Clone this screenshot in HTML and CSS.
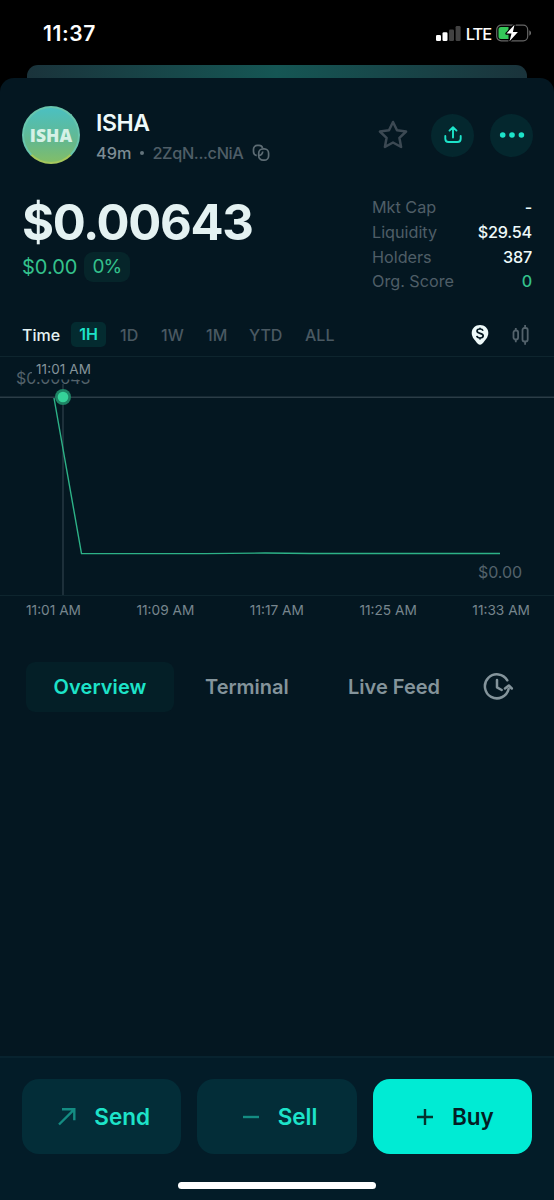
FILE: index.html
```html
<!DOCTYPE html>
<html lang="en">
<head>
<meta charset="utf-8">
<title>ISHA</title>
<link rel="stylesheet" href="styles.css">
</head>
<body>
<div class="phone">
  <header class="status">
    <span class="clock">11:37</span>
    <div class="status-right">
      <svg class="signal" width="25" height="16" viewBox="0 0 25 16">
        <rect x="0" y="9" width="5" height="6" rx="1.3" fill="#fff"/>
        <rect x="6.5" y="6.3" width="5" height="8.7" rx="1.3" fill="#fff"/>
        <rect x="13" y="3.4" width="5" height="11.6" rx="1.3" fill="#424242"/>
        <rect x="19.6" y="0" width="5" height="15" rx="1.3" fill="#424242"/>
      </svg>
      <span class="lte">LTE</span>
      <svg class="battery" width="36" height="18" viewBox="0 0 36 18">
        <rect x=".7" y="1.2" width="31" height="15.6" rx="4.5" fill="none" stroke="#666" stroke-width="1.2"/>
        <path d="M33.4 6.3q1.6 1 1.6 2.7t-1.6 2.7z" fill="#777"/>
        <path d="M5 3h7.5v12H5a2.500 2.500 0 0 1-2.500-2.500v-7A2.500 2.500 0 0 1 5 3z" fill="#35c759"/>
        <path d="M18.500.8L10.500 9.500h5l-2 7.700 8.400-9.200h-5z" fill="#fff" stroke="#000" stroke-width="2.400" paint-order="stroke" stroke-linejoin="round"/>
      </svg>
    </div>
  </header>
  <div class="back-card"></div>
  <main class="sheet">
    <section class="token">
      <div class="avatar">ISHA</div>
      <div class="identity">
        <h1 class="name">ISHA</h1>
        <div class="meta">
          <span class="age">49m</span><span class="dot"></span><span class="address">2ZqN...cNiA</span>
          <svg class="copy" width="18" height="18" viewBox="0 0 18 18" fill="none" stroke="#5d6c74" stroke-width="1.700">
            <path d="M4.700 11.600C2.700 11 1.500 9.400 1.500 7.400V5.200A3.800 3.800 0 0 1 5.300 1.400h1.800a3.800 3.800 0 0 1 3.500 2.600M6.700 11.400a3.900 3.900 0 0 0 4-3.900"/>
            <rect x="6.700" y="4.900" width="9.900" height="11.300" rx="4.300"/>
          </svg>
        </div>
      </div>
      <div class="actions">
        <svg class="star" width="30" height="30" viewBox="0 0 30 30" fill="none" stroke="#3c4953" stroke-width="2.500" stroke-linejoin="round"><path d="M15 2l4 8.300 9.100 1.200-6.700 6.300 1.700 9.200-8.100-4.500-8.100 4.500 1.700-9.200-6.700-6.300 9.100-1.200z"/></svg>
        <span class="round"><svg width="20" height="20" viewBox="0 0 20 20" fill="none" stroke="#1de3c9" stroke-width="1.900" stroke-linecap="round" stroke-linejoin="round"><path d="M10 12.500V2.500M6.500 5.600L10 2.200l3.500 3.400M2.300 11v2.700q0 3.300 3.300 3.300h8.800q3.300 0 3.300-3.300V11"/></svg></span>
        <span class="round"><svg width="26" height="8" viewBox="0 0 26 8" fill="#1de3c9"><circle cx="3.700" cy="4" r="2.800"/><circle cx="13" cy="4" r="2.800"/><circle cx="22.400" cy="4" r="2.800"/></svg></span>
      </div>
    </section>
    <section class="summary">
      <div>
        <div class="price">$0.00643</div>
        <div class="change"><span>$0.00</span><span class="percent">0%</span></div>
      </div>
      <dl class="stats">
        <dt>Mkt Cap</dt><dd>-</dd>
        <dt>Liquidity</dt><dd>$29.54</dd>
        <dt>Holders</dt><dd>387</dd>
        <dt>Org. Score</dt><dd class="score">0</dd>
      </dl>
    </section>
    <nav class="ranges">
      <span class="label">Time</span>
      <span class="active">1H</span>
      <span class="d1">1D</span><span class="w1">1W</span><span class="m1">1M</span><span class="ytd">YTD</span><span class="all">ALL</span>
      <svg class="pin" width="18" height="22" viewBox="0 0 18 22"><path d="M9 1c4.700 0 8.300 3.500 8.300 8 0 4-2.900 7.200-6.100 10.700Q9 22 6.800 19.700C3.600 16.200.7 13 .7 9 .7 4.500 4.300 1 9 1z" fill="#eefafa"/><path d="M12 6.800C11.600 5.500 10.400 5 9 5 7.300 5 6 5.800 6 7.100c0 1.600 1.300 1.900 3 2.300s3.200.8 3.200 2.400c0 1.400-1.400 2.200-3.200 2.200-1.600 0-2.900-.7-3.200-2.100M9 3.700V5m0 9v1.400" fill="none" stroke="#041721" stroke-width="1.700"/></svg>
      <svg class="candles" width="18" height="22" viewBox="0 0 18 22" fill="none" stroke="#53626b" stroke-width="1.800"><rect x="1.500" y="6.500" width="4.600" height="9" rx="2"/><rect x="10.500" y="4" width="5.200" height="13.500" rx="2"/><path d="M3.800 4V6.500m0 9v2.700M13.100 1v3m0 13.500v3.200"/></svg>
    </nav>
    <svg class="chart" width="554" height="238" viewBox="0 0 554 238">
      <text class="level" x="16" y="26.800">$0.00643</text>
      <rect x="32" y="2" width="62" height="20.500" fill="#041721"/>
      <path class="grid" d="M0 40.200H554"/>
      <path class="cursor" d="M63 27V238"/>
      <path class="series" d="M54 41L81.500 196.600H205L265 196 310 196.500H500"/>
      <circle cx="63" cy="40" r="8" fill="#1f8465"/>
      <circle cx="63" cy="40" r="5.300" fill="#35d399"/>
      <text class="tick" x="36" y="16.800" textLength="55">11:01 AM</text>
      <text class="level" x="478" y="221" textLength="44">$0.00</text>
    </svg>
    <div class="axis"><span>11:01 AM</span><span>11:09 AM</span><span>11:17 AM</span><span>11:25 AM</span><span>11:33 AM</span></div>
    <nav class="tabs">
      <span class="tab selected">Overview</span>
      <span class="tab terminal">Terminal</span>
      <span class="tab feed">Live Feed</span>
      <svg class="history" width="32" height="30" viewBox="0 0 32 30" fill="none" stroke="#84949b" stroke-width="2.500" stroke-linecap="round" stroke-linejoin="round"><path d="M25.300 8.300A12 12 0 1 0 26.600 17M15 8v7.300l4.700 2.700M23 16.500l3.800-3 3 3"/></svg>
    </nav>
  </main>
  <footer class="bar">
    <div class="buttons">
      <div class="button"><svg width="20" height="20" viewBox="0 0 20 20"><path d="M2 17.500L17 2.700M5 2.300h12.300v11"/></svg><span class="send">Send</span></div>
      <div class="button"><svg width="20" height="20" viewBox="0 0 20 20"><path d="M2 10h16"/></svg><span class="sell">Sell</span></div>
      <div class="button buy"><svg width="20" height="20" viewBox="0 0 20 20"><path d="M2 10h16M10 2v16"/></svg><span class="buy-text">Buy</span></div>
    </div>
    <div class="home"></div>
  </footer>
</div>
</body>
</html>
```

FILE: styles.css
```css
* { box-sizing: border-box; }
body { margin: 0; background: #000; font-family: Inter, "Liberation Sans", sans-serif; }
svg { display: block; flex: none; }
.phone { width: 554px; height: 1200px; display: flex; flex-direction: column; overflow: hidden; }
.status { height: 65px; flex: none; display: flex; justify-content: space-between; padding: 21px 22px 0 43px; color: #fff; }
.clock { font-size: 21px; line-height: 26px; font-weight: 600; letter-spacing: .6px; }
.status-right { display: flex; align-items: flex-start; }
.signal { margin-top: 5px; }
.lte { font-size: 16.500px; line-height: 26px; font-weight: 500; letter-spacing: -1.100px; margin-left: 5px; margin-right: 5px; }
.battery { margin-top: 3px; }
.back-card { height: 13px; flex: none; margin: 0 27px; border-radius: 11px 11px 0 0; background: linear-gradient(90deg, #1a333b, #155654 50%, #1a333b); }
.sheet { flex: 1; background: #041721; border-radius: 14px 14px 0 0; display: flex; flex-direction: column; }
.token { display: flex; height: 86px; padding: 28px 21px 0 22px; }
.avatar { width: 58px; height: 58px; border-radius: 50%; border: 2px solid #69c5ad; border-bottom-color: #a5c85d; background: linear-gradient(#4bc0c1, #66b88b 65%, #82be68); color: #d5f1e6; font: 800 17.500px/54px "Open Sans", sans-serif; text-align: center; }
.identity { margin-left: 16px; padding-top: 2px; }
.name { margin: 0; font-size: 23px; font-weight: 600; line-height: 30px; letter-spacing: -.4px; color: #eefafa; }
.meta { display: flex; align-items: center; height: 30px; font-size: 16.300px; font-weight: 500; color: #4f5e67; }
.age { color: #7c8c94; }
.address { letter-spacing: -.35px; }
.dot { width: 4px; height: 4px; border-radius: 50%; background: #63737b; margin: 0 8px 0 9px; }
.copy { margin-left: 8px; }
.actions { margin-left: auto; display: flex; align-items: center; height: 58px; }
.star { margin-right: 23px; }
.round { width: 43px; height: 43px; border-radius: 50%; background: #04272e; display: flex; align-items: center; justify-content: center; }
.round + .round { margin-left: 16px; }
.summary { height: 147px; padding: 32px 22px 0; display: flex; justify-content: space-between; }
.price { font-size: 49px; font-weight: 700; line-height: 54px; letter-spacing: -1.350px; color: #e4f2f2; }
.change { display: flex; align-items: center; gap: 7px; height: 30px; margin-top: 2px; font-size: 20px; color: #34c18c; }
.percent { width: 46px; height: 30px; line-height: 30px; padding-left: 8px; font-size: 19px; letter-spacing: -.8px; border-radius: 9px; background: #06252a; }
.stats { width: 160px; margin: -1px 0 0; display: grid; grid-template-columns: auto auto; grid-auto-rows: 24.800px; line-height: 25px; font-size: 16.200px; }
.stats dt { color: #4f5e67; }
.stats dd { margin: 0; text-align: right; color: #eefafa; font-weight: 500; letter-spacing: -.2px; }
.stats .score { color: #34c18c; }
.ranges { height: 46px; padding: 2px 24px 0 22px; display: flex; align-items: center; border-bottom: 1px solid #0e252e; font-size: 16px; font-weight: 500; color: #4a5962; }
.label { color: #e4f2f2; font-weight: 500; width: 49px; }
.active { width: 35px; height: 25px; line-height: 25px; border-radius: 5px; background: #042b30; color: #1de3c9; text-align: center; font-weight: 600; }
.d1 { margin-left: 14px; width: 41px; }
.w1 { width: 45px; }
.m1 { width: 43px; }
.ytd { width: 56px; }
.pin { margin-left: auto; }
.candles { margin-left: 23px; }
.chart { font-family: Inter, sans-serif; }
.level { font-size: 16px; fill: #53626b; }
.tick { font-size: 13.500px; fill: #84949b; }
.grid { stroke: #2b3d47; stroke-width: 1.500; }
.cursor { stroke: #344550; stroke-width: 1.100; }
.series { stroke: #2db287; stroke-width: 1.400; fill: none; }
.axis { height: 32px; border-top: 1px solid #0e252e; padding: 5px 24px 0 26px; display: flex; justify-content: space-between; font-size: 13.700px; line-height: 19px; color: #77868e; }
.tabs { margin: 35px 40px 0 26px; height: 50px; display: flex; align-items: center; font-size: 20px; font-weight: 600; color: #84949b; }
.selected { width: 148px; height: 50px; line-height: 50px; background: #041f27; border-radius: 9px; color: #1de3c9; text-align: center; letter-spacing: .1px; }
.terminal { margin-left: 31px; width: 143px; }
.feed { flex: 1; }
.bar { height: 144px; flex: none; background: #031c28; border-top: 2px solid #08232f; padding: 21px 22px 0; }
.buttons { display: grid; grid-template-columns: repeat(3, 1fr); gap: 16px; }
.button { height: 75px; border-radius: 17px; padding-left: 4px; background: #032d38; display: flex; align-items: center; justify-content: center; gap: 17px; font-size: 22.500px; font-weight: 600; color: #1de3c9; }
.button svg { fill: none; stroke: #148c82; stroke-width: 2.400; }
.button.buy { background: #00ebd4; color: #041d24; }
.button.buy svg { stroke: #04342f; stroke-width: 2.400; }
.home { width: 198px; height: 7px; border-radius: 4px; background: #fff; margin: 28px auto 0; }
```
